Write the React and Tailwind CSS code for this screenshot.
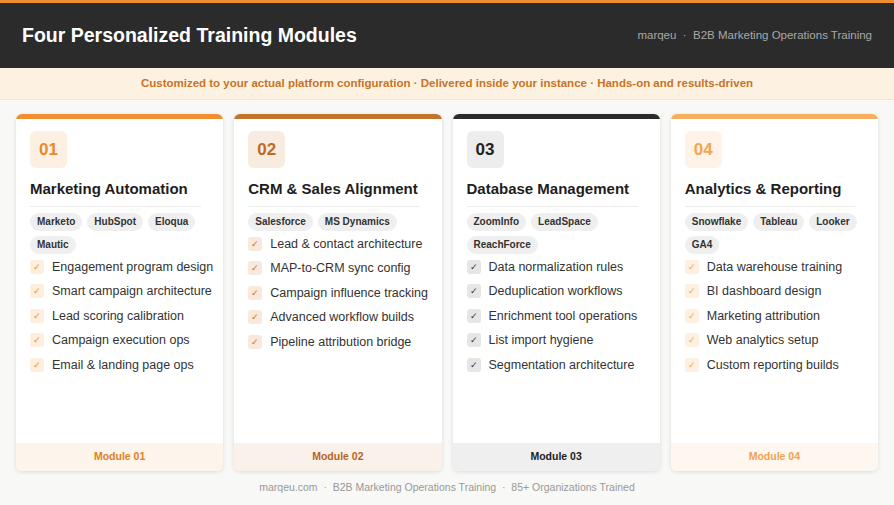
const modules = [
  {
    n: '01', title: 'Marketing Automation', tags: ['Marketo', 'HubSpot', 'Eloqua', 'Mautic'],
    items: ['Engagement program design', 'Smart campaign architecture', 'Lead scoring calibration', 'Campaign execution ops', 'Email & landing page ops'],
    bar: 'bg-[#ef8f32]', numBg: 'bg-[#fdf0e3]', num: 'text-[#e8892c]', chkBg: 'bg-[#fdeedd]', chk: 'text-[#ef8f32]', footBg: 'bg-[#fdf4ec]', foot: 'text-[#e0801e]',
  },
  {
    n: '02', title: 'CRM & Sales Alignment', tags: ['Salesforce', 'MS Dynamics'],
    items: ['Lead & contact architecture', 'MAP-to-CRM sync config', 'Campaign influence tracking', 'Advanced workflow builds', 'Pipeline attribution bridge'],
    bar: 'bg-[#c4732a]', numBg: 'bg-[#f8ece1]', num: 'text-[#c06a1f]', chkBg: 'bg-[#f8e9dc]', chk: 'text-[#c4732a]', footBg: 'bg-[#f9f1ea]', foot: 'text-[#b8641c]',
  },
  {
    n: '03', title: 'Database Management', tags: ['ZoomInfo', 'LeadSpace', 'ReachForce'],
    items: ['Data normalization rules', 'Deduplication workflows', 'Enrichment tool operations', 'List import hygiene', 'Segmentation architecture'],
    bar: 'bg-[#2b2b2b]', numBg: 'bg-[#ededed]', num: 'text-[#222]', chkBg: 'bg-[#e6e6e6]', chk: 'text-[#333]', footBg: 'bg-[#efefef]', foot: 'text-[#222]',
  },
  {
    n: '04', title: 'Analytics & Reporting', tags: ['Snowflake', 'Tableau', 'Looker', 'GA4'],
    items: ['Data warehouse training', 'BI dashboard design', 'Marketing attribution', 'Web analytics setup', 'Custom reporting builds'],
    bar: 'bg-[#f5ae5e]', numBg: 'bg-[#fef3e6]', num: 'text-[#f2a552]', chkBg: 'bg-[#fef0e0]', chk: 'text-[#f2a552]', footBg: 'bg-[#fef7ef]', foot: 'text-[#f0a24e]',
  },
];

function Card({ m }) {
  return (
    <div className="flex-1 flex flex-col bg-white rounded-md overflow-hidden shadow-[0_1px_4px_rgba(0,0,0,0.12)]">
      <div className={`h-[5px] ${m.bar}`} />
      <div className="flex-1 px-[14px] pt-[12px]">
        <div className={`w-[37px] h-[37px] rounded-md flex items-center justify-center text-[17px] font-bold ${m.numBg} ${m.num}`}>{m.n}</div>
        <div className="mt-[10px] pb-[5px] border-b border-[#ececec] text-[15px] font-bold text-[#1e1e1e] mr-[8px] whitespace-nowrap">{m.title}</div>
        <div className="flex flex-wrap gap-x-[5px] gap-y-[5px] mt-[6px]">
          {m.tags.map((t) => (
            <span key={t} className="px-[7px] h-[18px] flex items-center rounded-full bg-[#efefef] text-[10px] font-bold text-[#333]">{t}</span>
          ))}
        </div>
        <div className="mt-[5px] flex flex-col gap-[8px]">
          {m.items.map((it) => (
            <div key={it} className="flex items-center gap-[8px] text-[12.5px] text-[#333] leading-[16.5px] whitespace-nowrap">
              <span className={`w-[14px] h-[14px] shrink-0 rounded-[3px] flex items-center justify-center text-[9px] ${m.chkBg} ${m.chk}`}>✓</span>
              {it}
            </div>
          ))}
        </div>
      </div>
      <div className={`h-[28px] flex items-center justify-center text-[10.5px] font-bold ${m.footBg} ${m.foot}`}>Module {m.n}</div>
    </div>
  );
}

export default function App() {
  return (
    <div className="w-[894px] h-[505px] bg-[#f8f8f6] flex flex-col" style={{ fontFamily: 'Helvetica, "Liberation Sans", Arial, sans-serif' }}>
      <div className="h-[3px] bg-[#ef8f32]" />
      <div className="h-[65px] bg-[#2b2b2b] flex items-center justify-between px-[22px]">
        <div className="text-[19.5px] font-bold text-white">Four Personalized Training Modules</div>
        <div className="text-[11.5px] text-[#a8a8a8]">marqeu&nbsp;&nbsp;·&nbsp;&nbsp;B2B Marketing Operations Training</div>
      </div>
      <div className="h-[32px] bg-[#fdf1e2] border-b border-[#f3e3cf] flex items-center justify-center text-[11.5px] font-bold text-[#c8741f]">
        Customized to your actual platform configuration · Delivered inside your instance · Hands-on and results-driven
      </div>
      <div className="h-[357px] mt-[14px] px-[16px] flex gap-[11px]">
        {modules.map((m) => <Card key={m.n} m={m} />)}
      </div>
      <div className="flex-1 flex items-center justify-center text-[10.5px] text-[#999]">
        marqeu.com&nbsp;&nbsp;·&nbsp;&nbsp;B2B Marketing Operations Training&nbsp;&nbsp;·&nbsp;&nbsp;85+ Organizations Trained
      </div>
    </div>
  );
}
